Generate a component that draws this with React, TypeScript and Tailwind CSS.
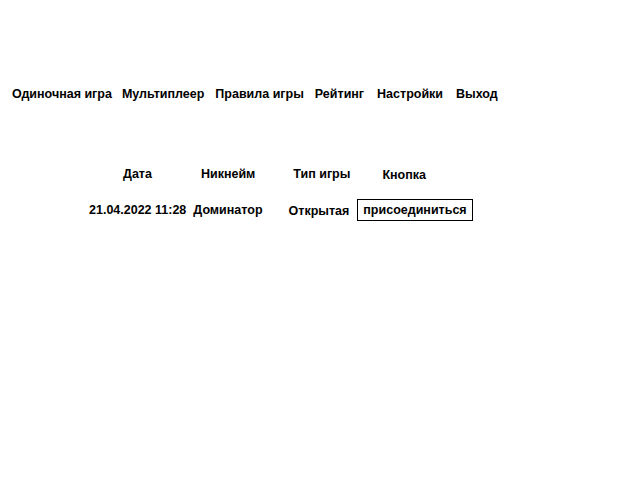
export default function App() {
  const nav: [string, string][] = [
    ['Одиночная игра', 'ml-[12px]'],
    ['Мультиплеер', 'ml-[10px]'],
    ['Правила игры', 'ml-[11px]'],
    ['Рейтинг', 'ml-[11px]'],
    ['Настройки', 'ml-[13px]'],
    ['Выход', 'ml-[13px]'],
  ];
  return (
    <div
      className="h-[480px] w-[640px] bg-white text-[12.5px] font-bold text-black"
      style={{ fontFamily: '"Liberation Sans", Arial, sans-serif' }}
    >
      <nav className="flex pt-[86px] leading-[16px] whitespace-nowrap">
        {nav.map(([n, c]) => (
          <span key={n} className={c}>
            {n}
          </span>
        ))}
      </nav>
      <div className="mt-[64px] flex h-[16px] items-center whitespace-nowrap leading-[16px]">
        <span className="ml-[123px]">Дата</span>
        <span className="ml-[49px]">Никнейм</span>
        <span className="ml-[38px]">Тип игры</span>
        <span className="ml-[32px] mt-[2px]">Кнопка</span>
      </div>
      <div className="mt-[17px] flex h-[22px] items-center whitespace-nowrap leading-[16px]">
        <span className="ml-[89px]">21.04.2022 11:28</span>
        <span className="ml-[7px]">Доминатор</span>
        <span className="ml-[26px] mt-[2px]">Открытая</span>
        <button className="ml-[8px] h-[22px] border border-black px-[5px] font-bold leading-[16px]">
          присоединиться
        </button>
      </div>
    </div>
  );
}
